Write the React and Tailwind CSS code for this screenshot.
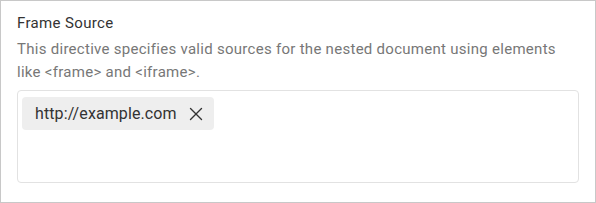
import { X } from "lucide-react";

export default function App() {
  return (
    <div className="w-[596px] h-[203px] border border-[#c8c8c8] bg-white px-4 pt-[12px] font-['Roboto',sans-serif]">
      <div className="text-[15px] leading-5 tracking-[0.35px] text-[#333333]">Frame Source</div>
      <p className="mt-[5px] max-w-[545px] text-[15px] leading-[23px] tracking-[0.28px] text-[#777777]">
        This directive specifies valid sources for the nested document using elements
        like &lt;frame&gt; and &lt;iframe&gt;.
      </p>
      <div className="mt-[6px] h-[93px] rounded-[4px] border border-[#e2e2e2] px-[4px] pt-[6px]">
        <div className="inline-flex h-[33px] items-center rounded-[4px] bg-[#eeeeee] pl-[13px] pr-[7px]">
          <span className="text-[16px] tracking-[0.1px] text-[#333333]">http://example.com</span>
          <button type="button" className="ml-[8px] flex items-center text-[#333333]">
            <X className="h-[22px] w-[22px]" strokeWidth={1.5} />
          </button>
        </div>
      </div>
    </div>
  );
}
